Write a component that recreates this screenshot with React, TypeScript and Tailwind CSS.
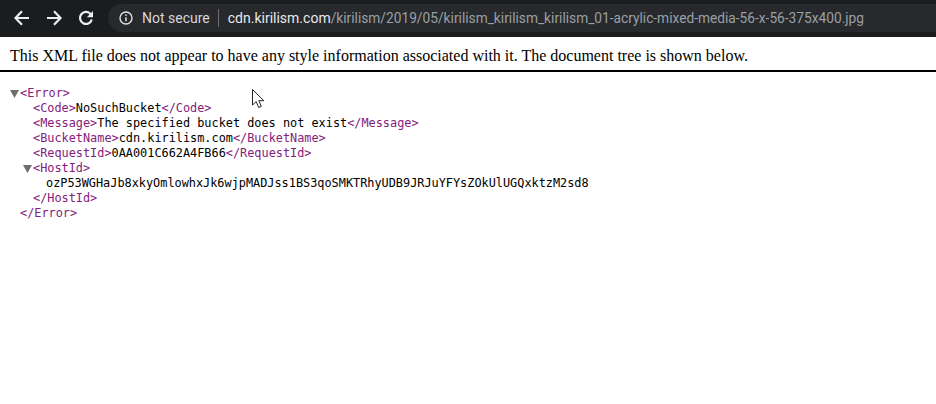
const T = ({ children }: { children: React.ReactNode }) => <span className="text-[#84207c]">{children}</span>;

const Row = ({ children, indent }: { children: React.ReactNode; indent: string }) => (
  <div className={`h-[15px] leading-[15px] whitespace-pre ${indent}`}>{children}</div>
);

const Arrow = ({ className }: { className: string }) => (
  <svg width="9" height="8" viewBox="0 0 9 8" className={className}>
    <path d="M0 0H9L4.5 8Z" fill="#6e6e6e" />
  </svg>
);

export default function App() {
  return (
    <div className="w-[936px] h-[404px] overflow-hidden bg-white relative">
      <div className="h-[37px] bg-[#1b1c1d] flex items-start font-['Roboto',sans-serif]">
        <div className="flex items-center w-[108px] h-[37px] pl-[14px] pb-[1px] shrink-0">
          <svg width="17" height="16" viewBox="0 0 17 16" fill="none" stroke="#eceef0" strokeWidth="2.2" className="mr-[15px]">
            <path d="M15 8H2M8 1.300L1.500 8L8 14.700" />
          </svg>
          <svg width="17" height="16" viewBox="0 0 17 16" fill="none" stroke="#eceef0" strokeWidth="2.2" className="mr-[15px]">
            <path d="M1 8h13M8 1.300 14.500 8 8 14.700" />
          </svg>
          <svg width="16" height="16" viewBox="0 0 16 16" fill="none" stroke="#eceef0" strokeWidth="2.2">
            <path d="M12.800 4.300A6 6 0 1 0 13.800 9.500" />
            <path d="M15 1v6.200H8.800z" fill="#eceef0" stroke="none" />
          </svg>
        </div>
        <div className="flex-1 h-[28px] mt-[4px] bg-[#27292c] rounded-l-[14px] flex items-center pl-[11px] text-[14px] whitespace-nowrap">
          <svg width="14" height="14" viewBox="0 0 14 14" fill="none" className="mr-[9px]">
            <circle cx="7" cy="7" r="6" stroke="#dfe1e5" strokeWidth="1.400" />
            <path d="M7 6.200v4M7 3.600v1.500" stroke="#dfe1e5" strokeWidth="1.500" />
          </svg>
          <span className="text-[#d5d7da]">Not secure</span>
          <span className="w-px h-[18px] bg-[#6a6c70] ml-[8px] mr-[9px]" />
          <span className="text-[#e8eaed]">cdn.kirilism.com</span>
          <span className="text-[#9aa0a6] text-[13.72px]">/kirilism/2019/05/kirilism_kirilism_kirilism_01-acrylic-mixed-media-56-x-56-375x400.jpg</span>
        </div>
      </div>
      <div className="h-[33px] pl-[10px] pt-[10px] text-[16px] leading-[18px] text-black font-['Liberation_Serif',serif] whitespace-nowrap">
        This XML file does not appear to have any style information associated with it. The document tree is shown below.
      </div>
      <div className="h-[2px] bg-black" />
      <div className="relative pt-[14px] pl-[20px] text-[11.875px] text-black font-['DejaVu_Sans_Mono',monospace]">
        <Arrow className="absolute left-[10px] top-[18px]" />
        <Arrow className="absolute left-[23px] top-[93px]" />
        <Row indent=""><T>{"<Error>"}</T></Row>
        <Row indent="pl-[13px]"><T>{"<Code>"}</T>NoSuchBucket<T>{"</Code>"}</T></Row>
        <Row indent="pl-[13px]"><T>{"<Message>"}</T>The specified bucket does not exist<T>{"</Message>"}</T></Row>
        <Row indent="pl-[13px]"><T>{"<BucketName>"}</T>cdn.kirilism.com<T>{"</BucketName>"}</T></Row>
        <Row indent="pl-[13px]"><T>{"<RequestId>"}</T>0AA001C662A4FB66<T>{"</RequestId>"}</T></Row>
        <Row indent="pl-[13px]"><T>{"<HostId>"}</T></Row>
        <Row indent="pl-[26px]">ozP53WGHaJb8xkyOmlowhxJk6wjpMADJss1BS3qoSMKTRhyUDB9JRJuYFYsZOkUlUGQxktzM2sd8</Row>
        <Row indent="pl-[13px]"><T>{"</HostId>"}</T></Row>
        <Row indent=""><T>{"</Error>"}</T></Row>
      </div>
      <svg width="14" height="20" viewBox="0 0 14 20" className="absolute left-[252px] top-[89px]">
        <path d="M0.500 0.500V16L4.200 12.600L6.700 18.500L9.300 17.400L6.800 11.700H11.800Z" fill="#fff" stroke="#222" strokeWidth="1" />
      </svg>
    </div>
  );
}
